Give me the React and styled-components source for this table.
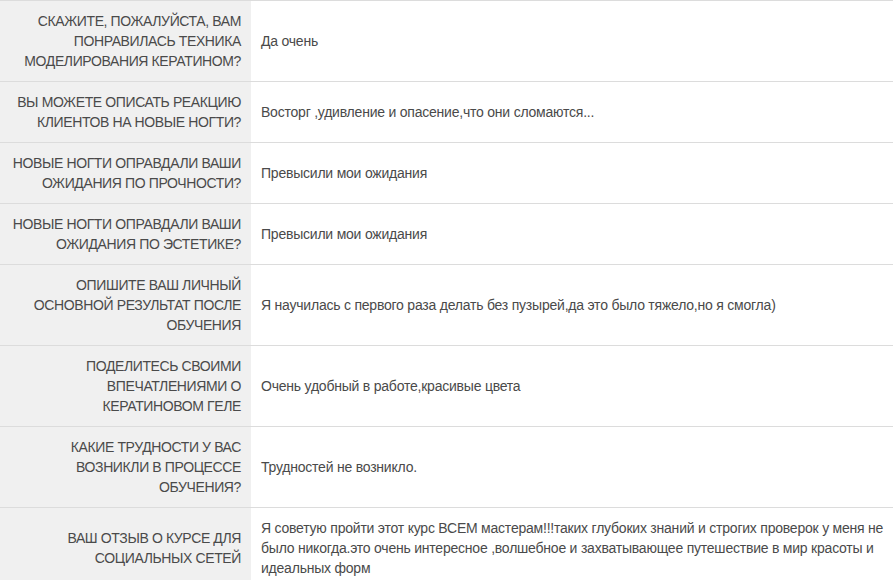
import React from 'react';
import styled, { createGlobalStyle } from 'styled-components';

const GlobalStyle = createGlobalStyle`
  body {
    margin: 0;
    background: #fff;
    font-family: "Liberation Sans", Arial, sans-serif;
  }
`;

const Table = styled.div`
  width: 893px;
  border-top: 1px solid #dcdcdc;
`;

const Row = styled.div`
  display: grid;
  grid-template-columns: 251px 1fr;
  border-bottom: 1px solid #dcdcdc;
`;

const Question = styled.div`
  background: #f0f0f0;
  padding: 10px 10px 10px 6px;
  text-align: right;
  text-transform: uppercase;
  font-size: 14px;
  line-height: 20px;
  letter-spacing: -0.38px;
  color: #4a4a4a;
  display: flex;
  align-items: center;
  justify-content: flex-end;
`;

const Answer = styled.div`
  padding: 10px 6px 10px 10px;
  font-size: 14px;
  line-height: 20px;
  letter-spacing: -0.22px;
  color: #4a4a4a;
  display: flex;
  align-items: center;
`;

const rows = [
  ['Скажите, пожалуйста, вам понравилась техника моделирования кератином?', 'Да очень'],
  ['Вы можете описать реакцию клиентов на новые ногти?', 'Восторг ,удивление и опасение,что они сломаются...'],
  ['Новые ногти оправдали ваши ожидания по прочности?', 'Превысили мои ожидания'],
  ['Новые ногти оправдали ваши ожидания по эстетике?', 'Превысили мои ожидания'],
  ['Опишите ваш личный основной результат после обучения', 'Я научилась с первого раза делать без пузырей,да это было тяжело,но я смогла)'],
  ['Поделитесь своими впечатлениями о кератиновом геле', 'Очень удобный в работе,красивые цвета'],
  ['Какие трудности у вас возникли в процессе обучения?', 'Трудностей не возникло.'],
  ['Ваш отзыв о курсе для социальных сетей', 'Я советую пройти этот курс ВСЕМ мастерам!!!таких глубоких знаний и строгих проверок у меня не было никогда.это очень интересное ,волшебное и захватывающее путешествие в мир красоты и идеальных форм'],
];

export default function App() {
  return (
    <>
      <GlobalStyle />
      <Table>
        {rows.map(([q, a], i) => (
          <Row key={i}>
            <Question><span>{q}</span></Question>
            <Answer><span>{a}</span></Answer>
          </Row>
        ))}
      </Table>
    </>
  );
}
